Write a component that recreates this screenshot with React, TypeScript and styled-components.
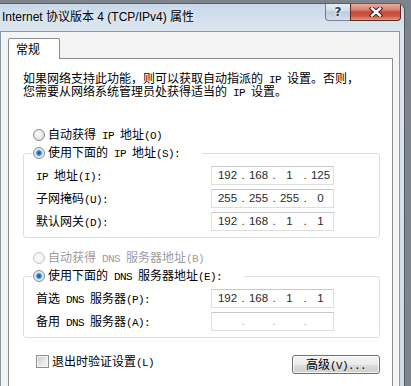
import React from "react";
import styled, { createGlobalStyle } from "styled-components";

const GlobalStyle = createGlobalStyle`
  html, body {
    margin: 0;
    padding: 0;
  }
  body {
    width: 411px;
    height: 386px;
    overflow: hidden;
    background: #7e848c;
    font-family: "Noto Sans CJK SC", "Noto Sans", sans-serif;
  }
`;

const CJK = `"Noto Sans CJK SC", "Noto Sans", sans-serif`;

const s = {
  Window: styled.div`
    box-sizing: border-box;
    margin-top: 3px;
    width: 405px;
    height: 383px;
    border-top: 1px solid #56606c;
    border-right: 1px solid #4e5763;
    border-top-right-radius: 7px;
    background: linear-gradient(to bottom, #c8d7e7 0%, #dce6f1 26px, #cddaea 100%);
    display: flex;
    flex-direction: column;
    overflow: hidden;
  `,
  TitleBar: styled.div`
    height: 27px;
    display: flex;
    align-items: flex-start;
    padding: 0 3px 0 2px;
  `,
  Title: styled.div`
    flex: 1;
    height: 27px;
    line-height: 27px;
    font-family: "Liberation Sans", "Noto Sans CJK SC", sans-serif;
    font-size: 12px;
    color: #000;
    white-space: nowrap;
    text-shadow: 0 0 6px rgba(255, 255, 255, 0.9);
  `,
  Caption: styled.div`
    display: flex;
    margin-top: -1px;
    height: 18px;
  `,
  HelpButton: styled.div`
    box-sizing: border-box;
    width: 25px;
    height: 18px;
    border: 1px solid rgba(62, 78, 98, 0.65);
    border-top: none;
    border-right: none;
    border-radius: 0 0 0 4px;
    background: linear-gradient(to bottom, #e9eff6 0%, #cfdbe7 48%, #bccbdc 52%, #d3dfeb 100%);
    display: flex;
    align-items: center;
    justify-content: center;
    font-family: "DejaVu Sans", sans-serif;
    font-weight: bold;
    font-size: 12px;
    color: #2e3d50;
    text-shadow: 0 0 2px #fff, 0 0 2px #fff;
  `,
  CloseButton: styled.div`
    box-sizing: border-box;
    width: 51px;
    height: 18px;
    border: 1px solid #5e2620;
    border-top: none;
    border-radius: 0 0 4px 0;
    background: linear-gradient(to bottom, #eab0a4 0%, #d98474 40%, #c54a38 52%, #cd5c47 78%, #e59a82 100%);
    display: flex;
    align-items: center;
    justify-content: center;
  `,
  Body: styled.div`
    flex: 1;
    display: flex;
    min-height: 0;
  `,
  Client: styled.div`
    box-sizing: border-box;
    width: 400px;
    border: 1px solid #8b98a8;
    border-bottom: none;
    background: #f4f4f4;
    padding: 6px 6px 0 7px;
    display: flex;
    flex-direction: column;
  `,
  Tab: styled.div`
    box-sizing: border-box;
    position: relative;
    z-index: 1;
    width: 52px;
    height: 21px;
    margin-bottom: -1px;
    border: 1px solid #898c95;
    border-bottom: none;
    border-radius: 2px 2px 0 0;
    background: #fff;
    padding-left: 7px;
    font-family: ${CJK};
    font-size: 12px;
    line-height: 19px;
    color: #000;
  `,
  Panel: styled.div`
    flex: 1;
    border: 1px solid #898c95;
    border-bottom: none;
    background: #fff;
    padding: 13px 12px 0 14px;
    display: flex;
    flex-direction: column;
    font-family: ${CJK};
    font-size: 12px;
    line-height: 13px;
    color: #000;
  `,
  IntroLine: styled.div`
    height: 13px;
    display: flex;
    align-items: center;
    white-space: nowrap;
  `,
  En: styled.span`
    font-family: "Liberation Mono", monospace;
    font-size: 11px;
    letter-spacing: -0.6px;
  `,
  RadioRow: styled.div<{ $top?: number; $disabled?: boolean; $inset?: number }>`
    display: flex;
    align-items: center;
    gap: 3px;
    height: 16px;
    margin-top: ${p => p.$top ?? 0}px;
    padding-left: ${p => p.$inset ?? 10}px;
    color: ${p => (p.$disabled ? "#9c9c9c" : "#000")};
    white-space: nowrap;
  `,
  Radio: styled.span<{ $checked?: boolean; $disabled?: boolean }>`
    box-sizing: border-box;
    flex: none;
    width: 12px;
    height: 12px;
    border-radius: 50%;
    border: 1px solid ${p => (p.$disabled ? "#c6c6c6" : "#8a8c8f")};
    background: ${p =>
      p.$checked
        ? "radial-gradient(circle at 50% 50%, #174f94 0px, #2f72c4 1.6px, #6aa7e6 2.6px, #bcdcf6 3.4px, #eef2f5 4px, #dadbdd 6px)"
        : p.$disabled
        ? "radial-gradient(circle at 45% 40%, #fdfdfd 0px, #efefef 6px)"
        : "radial-gradient(circle at 45% 40%, #ffffff 0px, #dcdde0 6px)"};
  `,
  Group: styled.fieldset`
    margin: 2px 0 0;
    padding: 0 0 6px 8px;
    min-width: 0;
    border: 1px solid #d5dfe5;
    border-radius: 3px;
  `,
  Legend: styled.legend`
    padding: 0 22px 0 1px;
    margin: 0;
    height: 16px;
  `,
  Rows: styled.div`
    display: grid;
    grid-template-columns: 175px 123px;
    grid-auto-rows: 19px;
    row-gap: 4px;
    margin-top: 5px;
    padding-left: 4px;
  `,
  Label: styled.div`
    height: 19px;
    display: flex;
    align-items: center;
    white-space: nowrap;
  `,
  IpBox: styled.div`
    box-sizing: border-box;
    width: 123px;
    height: 19px;
    border: 1px solid #dedede;
    border-top-color: #c8c8c8;
    padding-left: 3px;
    display: flex;
    align-items: center;
    font-family: "Liberation Sans", Arial, sans-serif;
    font-size: 11.5px;
    line-height: 1;
    color: #2a2a2a;
  `,
  Octet: styled.span`
    width: 25px;
    text-align: center;
  `,
  Dot: styled.span<{ $faint?: boolean }>`
    width: 6px;
    text-align: center;
    color: ${p => (p.$faint ? "#a8a8a8" : "#2a2a2a")};
  `,
  Footer: styled.div`
    display: flex;
    justify-content: space-between;
    align-items: flex-start;
    margin-top: 17px;
    padding-left: 13px;
  `,
  CheckRow: styled.div`
    display: flex;
    align-items: center;
    gap: 3px;
    height: 13px;
    white-space: nowrap;
  `,
  Checkbox: styled.span`
    box-sizing: border-box;
    flex: none;
    width: 13px;
    height: 13px;
    border: 1px solid #8e8f8f;
    box-shadow: inset 0 0 0 1px #f4f4f4;
    background: linear-gradient(135deg, #c6cacf 0%, #e6e8ea 55%, #f8f8f8 100%);
  `,
  Button: styled.button`
    box-sizing: border-box;
    width: 88px;
    height: 19px;
    padding: 0;
    border: 1px solid #707070;
    border-radius: 3px;
    background: linear-gradient(to bottom, #f3f3f3 0%, #ebebeb 50%, #dddddd 50%, #cfcfcf 100%);
    box-shadow: inset 0 0 0 1px rgba(255, 255, 255, 0.75);
    display: flex;
    align-items: center;
    justify-content: center;
    font-family: ${CJK};
    font-size: 12px;
    line-height: 13px;
    color: #000;
  `,
};

const Txt: React.FC<{ children: string }> = ({ children }) => (
  <span>
    {children.split(/([\u0020-\u007e]+)/).map((part, i) =>
      i % 2 ? <s.En key={i}>{part}</s.En> : part
    )}
  </span>
);

const IpField: React.FC<{ value: string[] | null }> = ({ value }) => {
  const parts = value ?? ["", "", "", ""];
  return (
    <s.IpBox>
      {parts.map((p, i) => (
        <React.Fragment key={i}>
          {i > 0 && <s.Dot $faint={!value}>.</s.Dot>}
          <s.Octet>{p}</s.Octet>
        </React.Fragment>
      ))}
    </s.IpBox>
  );
};

const CloseIcon = () => (
  <svg width="14" height="10" viewBox="0 0 14 10">
    <path d="M3 1.5 L11 8.5 M11 1.5 L3 8.5" stroke="#4d1a14" strokeWidth="4.4" strokeLinecap="square" />
    <path d="M3 1.5 L11 8.5 M11 1.5 L3 8.5" stroke="#ffffff" strokeWidth="2.4" strokeLinecap="square" />
  </svg>
);

const ipRows = [
  { label: "IP 地址(I):", value: ["192", "168", "1", "125"] },
  { label: "子网掩码(U):", value: ["255", "255", "255", "0"] },
  { label: "默认网关(D):", value: ["192", "168", "1", "1"] },
];

const dnsRows = [
  { label: "首选 DNS 服务器(P):", value: ["192", "168", "1", "1"] },
  { label: "备用 DNS 服务器(A):", value: null },
];

const App: React.FC = () => (
  <>
    <GlobalStyle />
    <s.Window>
      <s.TitleBar>
        <s.Title>Internet 协议版本 4 (TCP/IPv4) 属性</s.Title>
        <s.Caption>
          <s.HelpButton>?</s.HelpButton>
          <s.CloseButton>
            <CloseIcon />
          </s.CloseButton>
        </s.Caption>
      </s.TitleBar>
      <s.Body>
        <s.Client>
          <s.Tab>常规</s.Tab>
          <s.Panel>
            <s.IntroLine>
              <Txt>如果网络支持此功能，则可以获取自动指派的 IP 设置。否则，</Txt>
            </s.IntroLine>
            <s.IntroLine>
              <Txt>您需要从网络系统管理员处获得适当的 IP 设置。</Txt>
            </s.IntroLine>

            <s.RadioRow $top={29}>
              <s.Radio />
              <Txt>自动获得 IP 地址(O)</Txt>
            </s.RadioRow>
            <s.Group>
              <s.Legend>
                <s.RadioRow $inset={0}>
                  <s.Radio $checked />
                  <Txt>使用下面的 IP 地址(S):</Txt>
                </s.RadioRow>
              </s.Legend>
              <s.Rows>
                {ipRows.map(r => (
                  <React.Fragment key={r.label}>
                    <s.Label><Txt>{r.label}</Txt></s.Label>
                    <IpField value={r.value} />
                  </React.Fragment>
                ))}
              </s.Rows>
            </s.Group>

            <s.RadioRow $top={12} $disabled>
              <s.Radio $disabled />
              <Txt>自动获得 DNS 服务器地址(B)</Txt>
            </s.RadioRow>
            <s.Group>
              <s.Legend>
                <s.RadioRow $inset={0}>
                  <s.Radio $checked />
                  <Txt>使用下面的 DNS 服务器地址(E):</Txt>
                </s.RadioRow>
              </s.Legend>
              <s.Rows>
                {dnsRows.map(r => (
                  <React.Fragment key={r.label}>
                    <s.Label><Txt>{r.label}</Txt></s.Label>
                    <IpField value={r.value} />
                  </React.Fragment>
                ))}
              </s.Rows>
            </s.Group>

            <s.Footer>
              <s.CheckRow>
                <s.Checkbox />
                <Txt>退出时验证设置(L)</Txt>
              </s.CheckRow>
              <s.Button><Txt>高级(V)...</Txt></s.Button>
            </s.Footer>
          </s.Panel>
        </s.Client>
      </s.Body>
    </s.Window>
  </>
);

export default App;
